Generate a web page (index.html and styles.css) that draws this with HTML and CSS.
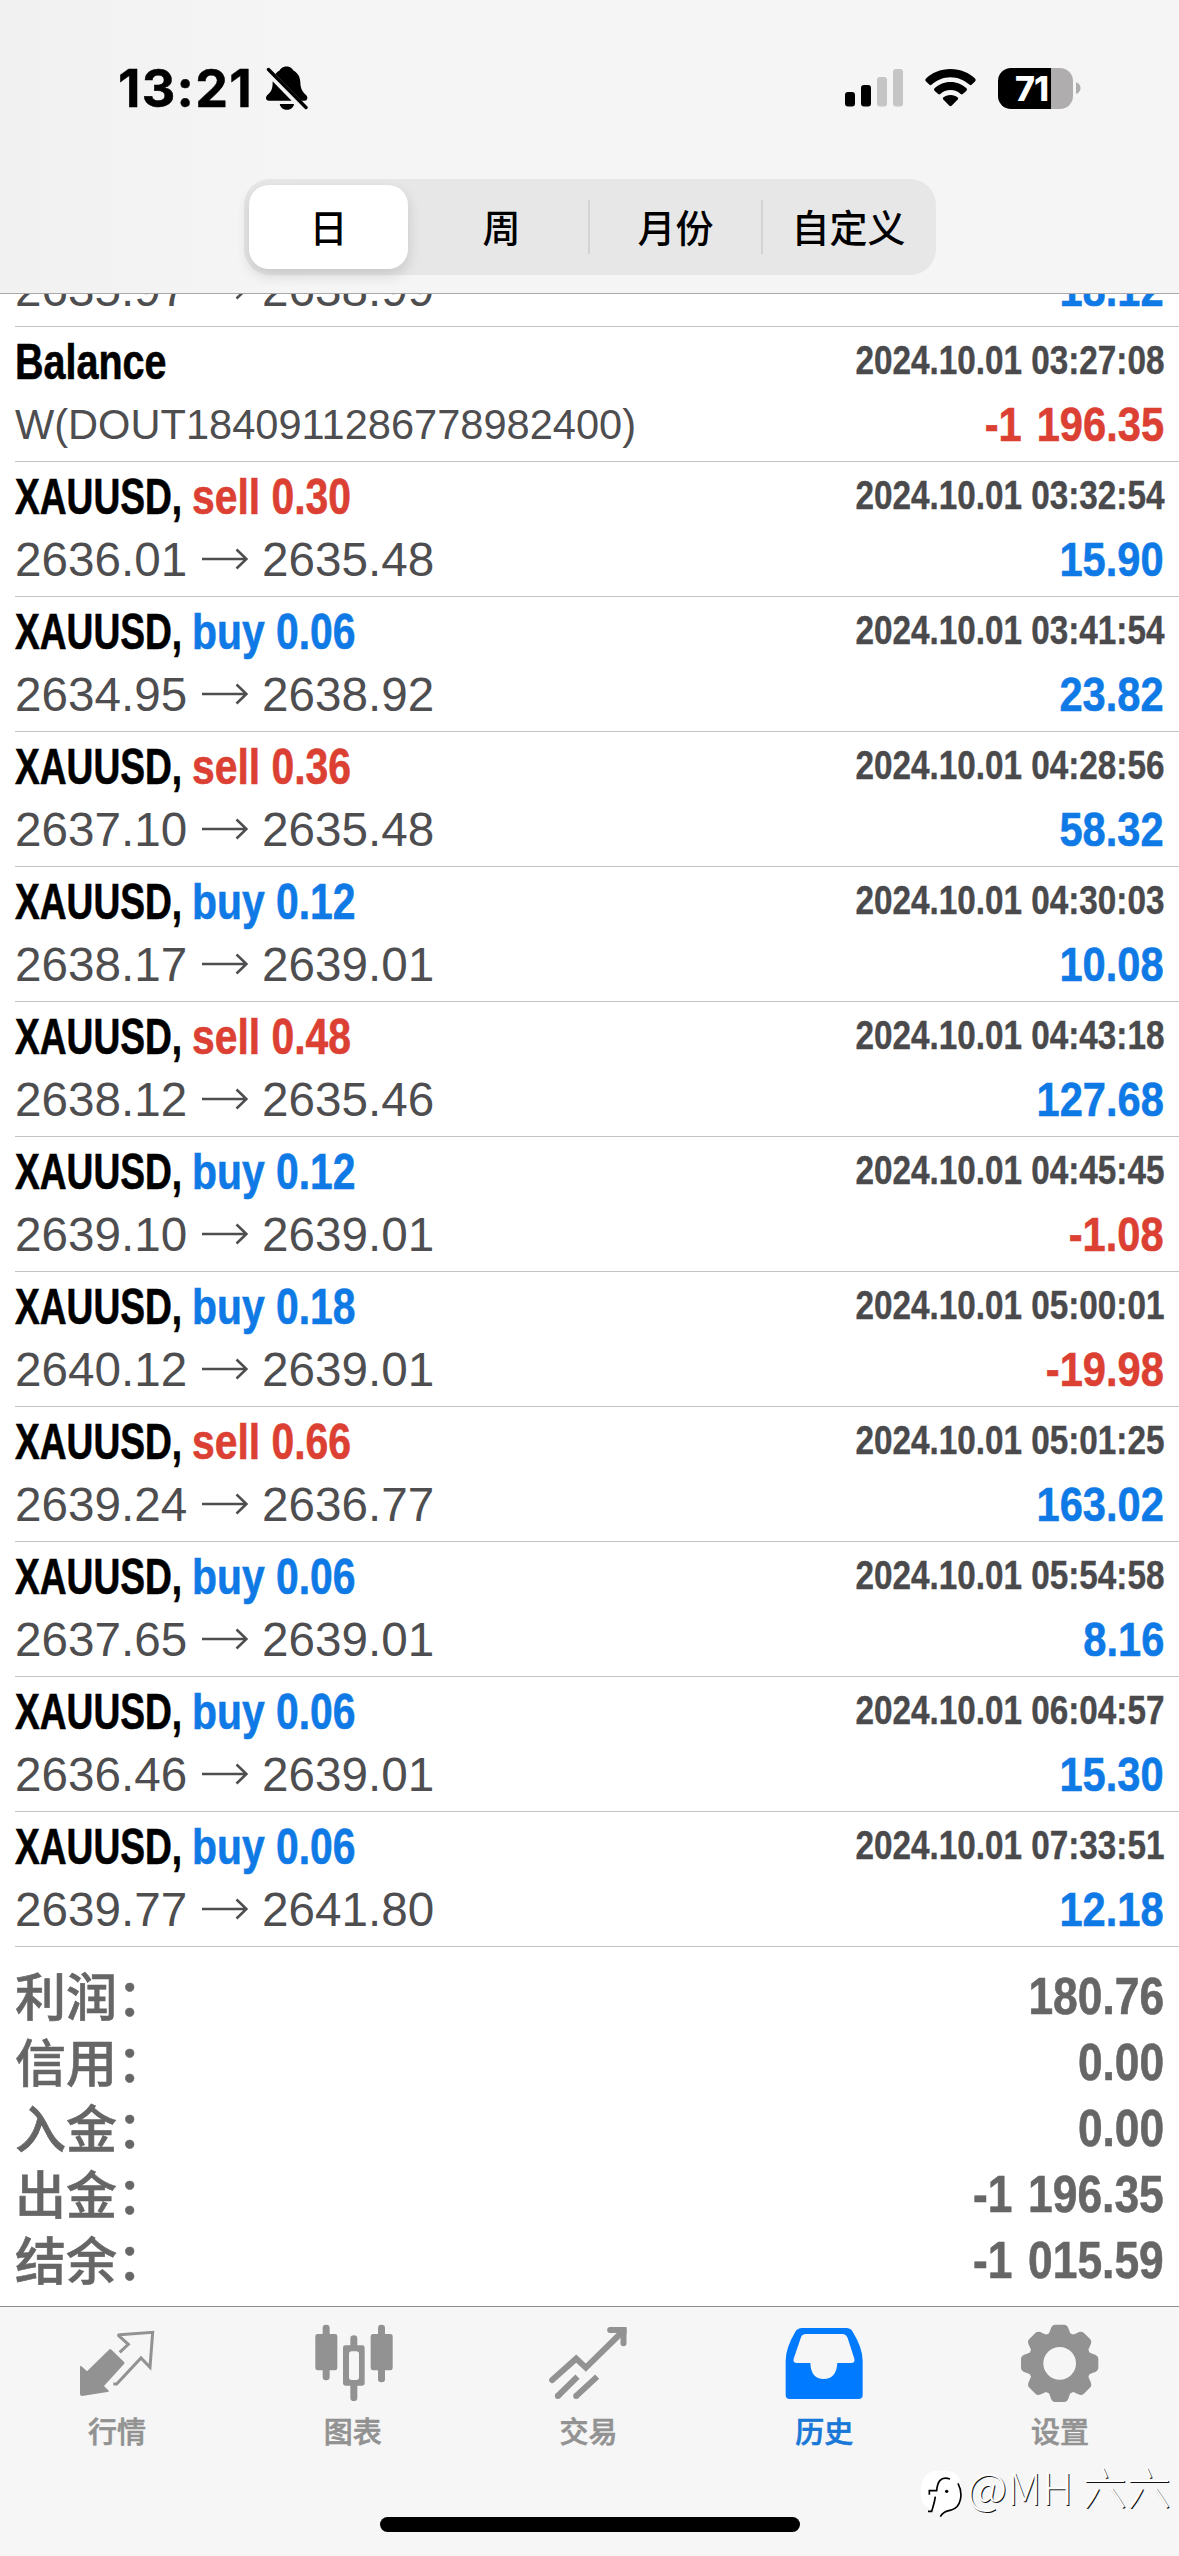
FILE: index.html
```html
<!DOCTYPE html>
<html lang="zh-CN">
<head>
<meta charset="utf-8">
<title>历史</title>
<link rel="stylesheet" href="styles.css">
</head>
<body>
<svg width="0" height="0" class="defs">
  <symbol id="arrow" viewBox="0 0 46 22"><path d="M0 11H44.500M34.500 1.500L44.500 11L34.500 20.500" fill="none" stroke="#4e4e50" stroke-width="2.600"/></symbol>
</svg>
<div class="screen">
  <header class="header">
    <div class="status">
      <div class="clock">
        <span class="time">13:21</span>
        <svg class="bell" width="42" height="44" viewBox="0 0 42 44">
          <path d="M20.500 .5C24.500 .5 26.500 3 27.500 4.500C32 7 34 11 34.300 16C34.500 23 36.500 25.500 39.500 28.500C41 30 41.500 31 41.300 32.500C41 34 40 34.700 38.500 34.700H3C1 34.700 0 33.500 0 32C0 30 1.500 29 3 27.500C6 24.500 6.500 21.500 6.700 16C7 11 9 7 13.500 4.500C14.500 3 16.500 .5 20.500 .5Z"/>
          <path d="M13.800 38H28C27.500 42 24 43.800 20.900 43.800S14.300 42 13.800 38Z"/>
          <path d="M1 4.500L39 43.500" stroke="#f5f4f5" stroke-width="7"/>
          <path d="M2.500 3.500L40 41.500" stroke="#000" stroke-width="3.400" stroke-linecap="round"/>
        </svg>
      </div>
      <div class="indicators">
        <svg width="58" height="38" viewBox="0 0 58 38">
          <rect x="0" y="23" width="10" height="14.500" rx="3"/><rect x="16" y="16" width="10" height="21.500" rx="3"/>
          <g fill="#c5c5c5"><rect x="32" y="8" width="10" height="29.500" rx="3"/><rect x="48" y="0" width="10" height="37.500" rx="3"/></g>
        </svg>
        <svg class="wifi" width="51" height="38" viewBox="0 0 51 38">
          <path d="M25.500 0C35.500 0 44.500 4 50 9.500Q51.300 11 50 12.500L46.500 15.800Q45.500 16.600 44.300 15.600C39 11 32.500 8.300 25.500 8.300S12 11 6.700 15.600Q5.500 16.600 4.500 15.800L1 12.500Q-.3 11 1 9.500C6.500 4 15.500 0 25.500 0Z"/>
          <path d="M25.500 13C32 13 37.500 15.500 41.500 19.300Q42.500 20.500 41.500 21.700L37.800 25Q36.800 25.800 35.700 24.900C33 22.500 29.500 21 25.500 21S18 22.500 15.300 24.900Q14.200 25.800 13.200 25L9.500 21.700Q8.500 20.500 9.500 19.300C13.500 15.500 19 13 25.500 13Z"/>
          <path d="M25.500 26C28.500 26 31 27 32.700 28.500Q33.600 29.500 32.700 30.600L26.600 36.800Q25.500 37.700 24.400 36.800L18.300 30.600Q17.400 29.500 18.300 28.500C20 27 22.500 26 25.500 26Z"/>
        </svg>
        <div class="battery"><span class="level">71</span></div>
        <svg class="nub" width="5" height="12" viewBox="0 0 5 12"><path d="M0 0Q4.500 2 4.500 6T0 12Z" fill="#b0adae"/></svg>
      </div>
    </div>
    <nav class="segments">
      <span class="segment active">日</span><span class="segment">周</span><span class="segment divided">月份</span><span class="segment divided">自定义</span>
    </nav>
  </header>

  <main class="list">
    <article class="deal clipped"><div class="bottom"><span class="price">2635.97</span><svg class="arrow"><use href="#arrow"/></svg><span class="price">2638.99</span><b class="amount gain">18.12</b></div></article>
    <article class="deal"><div class="top"><span class="title">Balance</span><time>2024.10.01 03:27:08</time></div><div class="bottom"><span class="note">W(DOUT1840911286778982400)</span><b class="amount loss">-1 196.35</b></div></article>
    <article class="deal"><div class="top"><span class="symbol">XAUUSD,</span><span class="side sell">sell 0.30</span><time>2024.10.01 03:32:54</time></div><div class="bottom"><span class="price">2636.01</span><svg class="arrow"><use href="#arrow"/></svg><span class="price">2635.48</span><b class="amount gain">15.90</b></div></article>
    <article class="deal"><div class="top"><span class="symbol">XAUUSD,</span><span class="side buy">buy 0.06</span><time>2024.10.01 03:41:54</time></div><div class="bottom"><span class="price">2634.95</span><svg class="arrow"><use href="#arrow"/></svg><span class="price">2638.92</span><b class="amount gain">23.82</b></div></article>
    <article class="deal"><div class="top"><span class="symbol">XAUUSD,</span><span class="side sell">sell 0.36</span><time>2024.10.01 04:28:56</time></div><div class="bottom"><span class="price">2637.10</span><svg class="arrow"><use href="#arrow"/></svg><span class="price">2635.48</span><b class="amount gain">58.32</b></div></article>
    <article class="deal"><div class="top"><span class="symbol">XAUUSD,</span><span class="side buy">buy 0.12</span><time>2024.10.01 04:30:03</time></div><div class="bottom"><span class="price">2638.17</span><svg class="arrow"><use href="#arrow"/></svg><span class="price">2639.01</span><b class="amount gain">10.08</b></div></article>
    <article class="deal"><div class="top"><span class="symbol">XAUUSD,</span><span class="side sell">sell 0.48</span><time>2024.10.01 04:43:18</time></div><div class="bottom"><span class="price">2638.12</span><svg class="arrow"><use href="#arrow"/></svg><span class="price">2635.46</span><b class="amount gain">127.68</b></div></article>
    <article class="deal"><div class="top"><span class="symbol">XAUUSD,</span><span class="side buy">buy 0.12</span><time>2024.10.01 04:45:45</time></div><div class="bottom"><span class="price">2639.10</span><svg class="arrow"><use href="#arrow"/></svg><span class="price">2639.01</span><b class="amount loss">-1.08</b></div></article>
    <article class="deal"><div class="top"><span class="symbol">XAUUSD,</span><span class="side buy">buy 0.18</span><time>2024.10.01 05:00:01</time></div><div class="bottom"><span class="price">2640.12</span><svg class="arrow"><use href="#arrow"/></svg><span class="price">2639.01</span><b class="amount loss">-19.98</b></div></article>
    <article class="deal"><div class="top"><span class="symbol">XAUUSD,</span><span class="side sell">sell 0.66</span><time>2024.10.01 05:01:25</time></div><div class="bottom"><span class="price">2639.24</span><svg class="arrow"><use href="#arrow"/></svg><span class="price">2636.77</span><b class="amount gain">163.02</b></div></article>
    <article class="deal"><div class="top"><span class="symbol">XAUUSD,</span><span class="side buy">buy 0.06</span><time>2024.10.01 05:54:58</time></div><div class="bottom"><span class="price">2637.65</span><svg class="arrow"><use href="#arrow"/></svg><span class="price">2639.01</span><b class="amount gain">8.16</b></div></article>
    <article class="deal"><div class="top"><span class="symbol">XAUUSD,</span><span class="side buy">buy 0.06</span><time>2024.10.01 06:04:57</time></div><div class="bottom"><span class="price">2636.46</span><svg class="arrow"><use href="#arrow"/></svg><span class="price">2639.01</span><b class="amount gain">15.30</b></div></article>
    <article class="deal"><div class="top"><span class="symbol">XAUUSD,</span><span class="side buy">buy 0.06</span><time>2024.10.01 07:33:51</time></div><div class="bottom"><span class="price">2639.77</span><svg class="arrow"><use href="#arrow"/></svg><span class="price">2641.80</span><b class="amount gain">12.18</b></div></article>
  </main>

  <section class="summary">
    <div class="total"><span>利润：</span><b>180.76</b></div>
    <div class="total"><span>信用：</span><b>0.00</b></div>
    <div class="total"><span>入金：</span><b>0.00</b></div>
    <div class="total"><span>出金：</span><b>-1 196.35</b></div>
    <div class="total"><span>结余：</span><b>-1 015.59</b></div>
  </section>

  <footer class="footer">
    <nav class="tabs">
      <a class="tab">
        <svg viewBox="234 96 240 240"><path d="M331 177Q334 178 336 181L373 217Q374 220 372 222L312 288L327 303Q326 306 322 306L246 318Q240 318 240 312V229Q243 227 247 231L261 244L327 179Q329 177 331 177Z"/><path d="M359 187L385 163L356 137Q355 134 359 134L458 127L450 232L423 204L350 282H340" fill="none" stroke="currentColor" stroke-width="9"/></svg>
        <span>行情</span>
      </a>
      <a class="tab">
        <svg viewBox="941 96 240 240"><rect x="945" y="132" width="66" height="109" rx="7"/><rect x="967" y="104" width="21" height="167" rx="10"/><rect x="1111" y="132" width="66" height="109" rx="7"/><rect x="1133" y="104" width="21" height="173" rx="10"/><path fill-rule="evenodd" d="M1035 166H1050V146Q1050 136 1060.500 136T1071 146V166H1086Q1093 166 1093 173V280Q1093 287 1086 287H1071V323Q1071 333 1060.500 333T1050 323V287H1035Q1028 287 1028 280V173Q1028 166 1035 166ZM1054 184Q1046 184 1046 192V262Q1046 270 1054 270H1068Q1076 270 1076 262V192Q1076 184 1068 184Z"/></svg>
        <span>图表</span>
      </a>
      <a class="tab">
        <svg viewBox="388.500 96 240 240"><g fill="none" stroke="currentColor" stroke-width="18"><path d="M398 270L470 206L499 233L611 123" stroke-linecap="round"/><path d="M572 120H612V160" stroke-linecap="round"/><path d="M415 318L474 260M470 318L533 260"/></g><circle cx="415" cy="318" r="9"/><circle cx="470" cy="318" r="9"/><path d="M600 111H615Q621 111 621 117V132Z"/></svg>
        <span>交易</span>
      </a>
      <a class="tab current">
        <svg viewBox="1096 96 240 240"><path fill-rule="evenodd" d="M1147 114H1280Q1293 114 1299 125Q1329 174 1329 212V314Q1329 327 1316 327H1110Q1098 327 1098 314V212Q1098 174 1127 125Q1134 114 1147 114ZM1159 132Q1148 132 1144 142L1122 206Q1119 219 1132 219H1172Q1174 267 1212 267T1253 219H1294Q1307 219 1304 206L1284 144Q1279 132 1268 132Z"/></svg>
        <span>历史</span>
      </a>
      <a class="tab">
        <svg viewBox="423 96 240 240">
          <defs><path id="tooth" d="M500 140Q506 135 511 120Q515 104 526 104H552Q563 104 567 120Q572 135 578 140L560 165H518Z"/></defs>
          <circle cx="539" cy="220" r="72" fill="none" stroke="currentColor" stroke-width="46"/>
          <use href="#tooth"/><use href="#tooth" transform="rotate(45 539 220)"/><use href="#tooth" transform="rotate(90 539 220)"/><use href="#tooth" transform="rotate(135 539 220)"/><use href="#tooth" transform="rotate(180 539 220)"/><use href="#tooth" transform="rotate(225 539 220)"/><use href="#tooth" transform="rotate(270 539 220)"/><use href="#tooth" transform="rotate(315 539 220)"/>
        </svg>
        <span>设置</span>
      </a>
    </nav>
    <div class="home"></div>
    <div class="watermark">
      <svg width="42" height="48" viewBox="0 0 126 144"><path d="M48 2H78Q122 4 124 56Q124 112 84 122L62 138L56 120Q4 122 2 72Q2 6 48 2Z" fill="#fff"/><path d="M90 27C60 17 52 38 50 62H28V74M46 80C44 98 38 112 35 124H24M114 40C130 70 124 112 94 120C78 124 68 126 61 140" fill="none" stroke="#000" stroke-width="5"/><circle cx="80" cy="64" r="5"/></svg>
      <span>@MH 六六</span>
    </div>
  </footer>
</div>
</body>
</html>
```

FILE: styles.css
```css
* { box-sizing: border-box; }
body { margin: 0; background: #fff; }
.defs { position: absolute; }
.screen {
  width: 1179px;
  height: 2556px;
  display: flex;
  flex-direction: column;
  overflow: hidden;
  font-family: "Liberation Sans", "Noto Sans CJK SC", sans-serif;
}

/* Header */
.header {
  height: 294px;
  flex: none;
  padding-top: 66px;
  background: linear-gradient(90deg, #f1f1f1 0, #f5f5f6 26%, #f5f5f6 100%);
  border-bottom: 1px solid #a9a9ab;
}
.status {
  height: 44px;
  margin-bottom: 69px;
  padding: 0 98px 0 118px;
  display: flex;
  justify-content: space-between;
}
.clock { display: flex; }
.time {
  width: 148px;
  font: 700 52px/45px Inter, sans-serif;
  letter-spacing: 1.3px;
  -webkit-text-stroke: .5px currentColor;
}
.indicators { display: flex; align-items: center; }
.wifi { margin-left: 22px; }
.battery {
  width: 75px;
  height: 41px;
  margin: 0 3px 0 22px;
  padding-left: 17px;
  border-radius: 13px;
  background: linear-gradient(90deg, #000 53px, #b0adae 53px);
}
.level {
  color: #fff;
  font: 800 34px/42px Inter, sans-serif;
  letter-spacing: -1px;
}
.segments {
  width: 692px;
  height: 96px;
  margin-left: 244px;
  padding: 6px 0 6px 5px;
  display: flex;
  align-items: center;
  border-radius: 26px;
  background: #e7e7e8;
}
.segment {
  width: 173px;
  height: 54px;
  text-align: center;
  font: 500 38px/51px "Noto Sans CJK SC", sans-serif;
}
.segment.active {
  width: 159px;
  height: 84px;
  margin-right: 7px;
  line-height: 81px;
  border-radius: 20px;
  background: #fff;
  box-shadow: 0 6px 14px rgba(0, 0, 0, .14);
}
.segment.divided { border-left: 2px solid #d3d3d5; }

/* Deals */
.list {
  height: 1653px;
  flex: none;
  display: flex;
  flex-direction: column;
  overflow: hidden;
}
.deal {
  height: 135px;
  flex: none;
  margin-left: 15px;
  padding-right: 15px;
  border-bottom: 1px solid #c3c3c5;
}
.deal.clipped {
  height: 33px;
  display: flex;
  flex-direction: column;
  justify-content: flex-end;
  padding-bottom: 7px;
}
.top, .bottom { flex: none; display: flex; white-space: nowrap; }
.top {
  height: 67px;
  font: 700 50px/70px "Liberation Sans", sans-serif;
  -webkit-text-stroke: .6px currentColor;
}
.bottom { height: 60px; line-height: 60px; }
.title, .symbol, .side, .price, .note { transform-origin: 0 50%; }
.title { transform: scaleX(.79); }
.symbol { width: 177px; transform: scaleX(.743); }
.side { transform: scaleX(.817); }
.sell, .loss { color: #db4033; }
.buy, .gain { color: #0f7ae5; }
time, .amount, .total b {
  margin-left: auto;
  transform-origin: 100% 50%;
}
time {
  color: #4a4a4c;
  font-size: 40px;
  line-height: 67px;
  -webkit-text-stroke: .4px currentColor;
  transform: scaleX(.832);
}
.price {
  width: 187px;
  color: #4e4e50;
  font-size: 48px;
  line-height: 61px;
  transform: scaleX(.992);
}
.arrow {
  width: 46px;
  height: 22px;
  margin: 19px 14px 0 0;
}
.note { color: #4e4e50; font-size: 43px; transform: scaleX(.967); }
.amount {
  font-size: 49px;
  -webkit-text-stroke: .6px currentColor;
  word-spacing: 4px;
  transform: scaleX(.85);
}

/* Totals */
.summary {
  height: 359px;
  flex: none;
  padding: 16px 15px 0;
  color: #666;
}
.total { height: 66px; display: flex; white-space: nowrap; }
.total span {
  font: 500 51px/62px "Noto Sans CJK SC", sans-serif;
  -webkit-text-stroke: .6px currentColor;
}
.total b {
  font-size: 52px;
  line-height: 66px;
  -webkit-text-stroke: .6px currentColor;
  word-spacing: 4px;
  transform: scaleX(.853);
}

/* Tab bar */
.footer {
  position: relative;
  flex: 1;
  border-top: 1px solid #8e8e90;
  background: #f6f6f6;
}
.tabs { height: 210px; padding-top: 15px; display: flex; }
.tab {
  flex: 1;
  display: flex;
  flex-direction: column;
  align-items: center;
  color: #929292;
  font: 500 29px/40px "Noto Sans CJK SC", sans-serif;
  -webkit-text-stroke: .6px currentColor;
}
.tab span { margin-right: 2px; }
.tab svg { width: 80px; height: 80px; margin-bottom: 8px; fill: currentColor; }
.tab.current { color: #007aff; }
.tab.current span { color: #1878d8; }
.home {
  width: 420px;
  height: 15px;
  margin: 0 auto;
  border-radius: 8px;
  background: #000;
}
.watermark {
  position: absolute;
  left: 920px;
  top: 163px;
  display: flex;
  gap: 5px;
  white-space: nowrap;
  color: #fdfdfd;
  font: 300 44px/32px "Noto Sans CJK SC", sans-serif;
  text-shadow: 1px 1px 0 #111;
}
```
